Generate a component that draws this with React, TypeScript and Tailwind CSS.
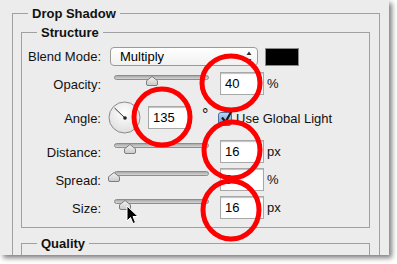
import React from "react";

const font = { fontFamily: '"Liberation Sans", Arial, sans-serif' };

const Thumb = ({ pos }: { pos: string }) => (
  <svg className={`absolute top-[4px] ${pos}`} width="12" height="10" viewBox="0 0 12 10">
    <defs>
      <linearGradient id="tg" x1="0" y1="0" x2="0" y2="1">
        <stop offset="0" stopColor="#f4f4f4" />
        <stop offset="1" stopColor="#c9c9c9" />
      </linearGradient>
    </defs>
    <path d="M6 0.5 L11.5 4.8 V8 Q11.5 9.5 10 9.5 H2 Q0.5 9.5 0.5 8 V4.8 Z" fill="url(#tg)" stroke="#7d7d7d" />
  </svg>
);

const Slider = ({ pos }: { pos: string }) => (
  <div className="relative w-[95px] h-[23px] ml-[13px] shrink-0">
    <div className="absolute top-[3px] left-0 right-0 h-[5px] rounded-full border border-[#8c8c8c] bg-gradient-to-b from-[#a9a9a9] to-[#d6d6d6]" />
    <Thumb pos={pos} />
  </div>
);

const Field = ({ value, w = "w-[44px]" }: { value: string; w?: string }) => (
  <div
    className={`${w} h-[23px] shrink-0 border border-[#a8a8a8] bg-white shadow-[inset_0_1px_1px_rgba(0,0,0,0.25)] pl-[4px] leading-[21px] text-[13px] text-black`}
  >
    {value}
  </div>
);

const Label = ({ text, top = "mt-[5px]" }: { text: string; top?: string }) => (
  <div className={`w-[79px] shrink-0 text-right text-[13px] leading-[15px] text-[#111] ${top}`}>{text}</div>
);

const sliderRows = [
  { label: "Distance:", value: "16", unit: "px", pos: "left-[10px]", mt: "mt-[6px]" },
  { label: "Spread:", value: "0", unit: "%", pos: "left-[-6px]", mt: "mt-[5px]" },
  { label: "Size:", value: "16", unit: "px", pos: "left-[5px]", mt: "mt-[5px]" },
];

export default function App() {
  return (
    <div className="relative w-[397px] h-[264px] bg-white overflow-hidden" style={font}>
      <div className="w-[389px] h-[255px] bg-[#ececec] overflow-hidden shadow-[3px_3px_5px_rgba(0,0,0,0.5)] pl-[12px] pt-[6px]">
        <fieldset className="w-[368px] h-[300px] border border-[#a0a0a0] pl-[8px]">
          <legend className="ml-[7px] px-[4px] text-[13px] leading-[15px] font-bold text-[#111]">Drop Shadow</legend>

          <fieldset className="mt-[4px] w-[349px] border border-[#a0a0a0] pb-[8px]">
            <legend className="ml-[15px] px-[4px] text-[13px] leading-[15px] font-bold text-[#111]">Structure</legend>

            {/* Blend mode */}
            <div className="flex items-center mt-[7px] h-[19px]">
              <Label text="Blend Mode:" top="" />
              <div className="relative ml-[9px] w-[148px] h-[19px] rounded-[4px] border border-[#9a9a9a] bg-gradient-to-b from-white to-[#f1f1f1] pl-[9px] text-[13px] leading-[17px] text-black">
                Multiply
                <svg className="absolute right-[5px] top-[3px]" width="6" height="12" viewBox="0 0 6 12">
                  <path d="M3 0.5 L5.5 4 H0.5 Z" fill="#333" />
                  <path d="M3 11.5 L5.5 8 H0.5 Z" fill="#333" />
                </svg>
              </div>
              <div className="ml-[7px] w-[34px] h-[18px] bg-black border border-[#8a8a8a]" />
            </div>

            {/* Opacity */}
            <div className="flex items-start mt-[6px]">
              <Label text="Opacity:" />
              <Slider pos="left-[32px]" />
              <div className="ml-[11px]"><Field value="40" /></div>
              <span className="ml-[3px] text-[13px] leading-[23px] text-[#111]">%</span>
            </div>

            {/* Angle */}
            <div className="flex items-start mt-[6px] h-[33px]">
              <Label text="Angle:" top="mt-[10px]" />
              <svg className="ml-[7px] shrink-0" width="33" height="33" viewBox="0 0 33 33">
                <defs>
                  <radialGradient id="dg" cx="0.5" cy="0.35" r="0.7">
                    <stop offset="0" stopColor="#ffffff" />
                    <stop offset="1" stopColor="#dcdcdc" />
                  </radialGradient>
                </defs>
                <circle cx="16.5" cy="16.5" r="15.5" fill="url(#dg)" stroke="#8a8a8a" />
                <line x1="17" y1="17" x2="6.5" y2="7" stroke="#333" strokeWidth="1" />
                <circle cx="17" cy="17" r="1.8" fill="#222" />
              </svg>
              <div className="ml-[7px] mt-[5px]"><Field value="135" w="w-[43px]" /></div>
              <span className="ml-[11px] w-[16px] mt-[5px] text-[16px] leading-[17px] text-[#111]">°</span>
              <div className="relative mt-[11px] w-[14px] h-[14px] rounded-[3px] border border-[#4a6fa0] bg-gradient-to-b from-[#bcd6f2] to-[#5d97d6]">
                <svg className="absolute left-[1px] top-[-5px]" width="14" height="17" viewBox="0 0 14 17">
                  <path d="M2 9.5 L5.5 14 L12.5 1.5" fill="none" stroke="#1b1b1b" strokeWidth="2.2" />
                </svg>
              </div>
              <span className="ml-[4px] mt-[10px] text-[13px] leading-[15px] text-[#111]">Use Global Light</span>
            </div>

            {sliderRows.map((r) => (
              <div key={r.label} className={`flex items-start ${r.mt}`}>
                <Label text={r.label} />
                <Slider pos={r.pos} />
                <div className="ml-[11px]"><Field value={r.value} /></div>
                <span className="ml-[3px] text-[13px] leading-[23px] text-[#111]">{r.unit}</span>
              </div>
            ))}
          </fieldset>

          <fieldset className="mt-[8px] w-[349px] h-[60px] border border-[#a0a0a0]">
            <legend className="ml-[15px] px-[4px] text-[13px] leading-[15px] font-bold text-[#111]">Quality</legend>
          </fieldset>
        </fieldset>
      </div>

      {/* red annotation circles */}
      <svg className="absolute inset-0 pointer-events-none" width="397" height="264" viewBox="0 0 397 264">
        <g fill="none" stroke="#ff0000" strokeWidth="5">
          <ellipse cx="231" cy="83" rx="29" ry="27" />
          <ellipse cx="162" cy="117" rx="28" ry="28" />
          <ellipse cx="232" cy="150" rx="28" ry="28" />
          <ellipse cx="231" cy="210" rx="28" ry="29" />
        </g>
      </svg>

      {/* mouse pointer */}
      <svg className="absolute left-[126px] top-[205px] pointer-events-none" width="14" height="20" viewBox="0 0 14 20">
        <path d="M1 1 V16 L4.5 12.5 L7 18.5 L9.5 17.5 L7 11.5 H12 Z" fill="#000" stroke="#fff" strokeWidth="1" />
      </svg>
    </div>
  );
}
